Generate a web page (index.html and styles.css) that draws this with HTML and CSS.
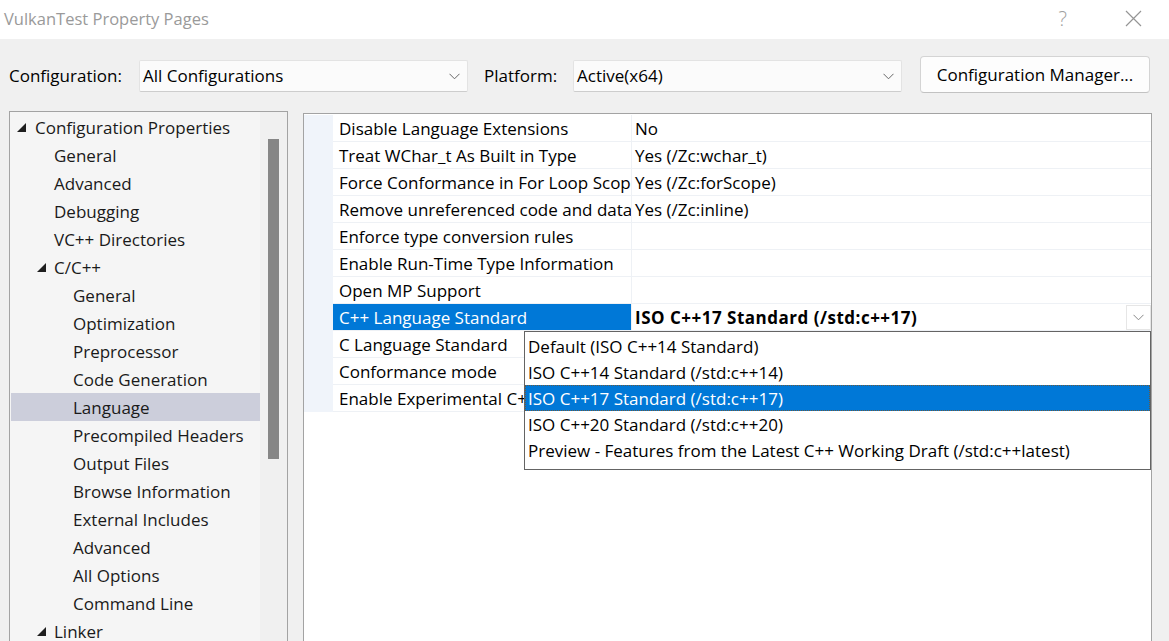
FILE: index.html
```html
<!DOCTYPE html>
<html>
<head>
<meta charset="utf-8">
<title>VulkanTest Property Pages</title>
<link rel="stylesheet" href="styles.css">
</head>
<body>
<div class="window">
  <div class="titlebar">
    <span class="title">VulkanTest Property Pages</span>
    <div class="caption">
      <span class="help">?</span>
      <svg class="close" width="17" height="17" viewBox="0 0 17 17"><path d="M1 1L16 16M16 1L1 16" stroke="#959595" stroke-width="1.2" fill="none"/></svg>
    </div>
  </div>
  <div class="content">
    <div class="toolbar">
      <span class="lbl lbl-config">Configuration:</span>
      <div class="combo"><span class="combo-text">All Configurations</span><svg class="chev" width="11" height="7" viewBox="0 0 11 7"><path d="M0.5 0.8L5.5 5.8L10.5 0.8" stroke="#666" stroke-width="1" fill="none"/></svg></div>
      <span class="lbl lbl-platform">Platform:</span>
      <div class="combo"><span class="combo-text">Active(x64)</span><svg class="chev" width="11" height="7" viewBox="0 0 11 7"><path d="M0.5 0.8L5.5 5.8L10.5 0.8" stroke="#666" stroke-width="1" fill="none"/></svg></div>
      <button class="btn">Configuration Manager...</button>
    </div>
    <div class="main">
      <div class="tree">
        <ul class="tree-items">
          <li class="node l0"><svg class="tri" width="9" height="9" viewBox="0 0 9 9"><path d="M9 0L9 9L0 9Z" fill="#1e1e1e"/></svg>Configuration Properties</li>
          <li class="node l1">General</li>
          <li class="node l1">Advanced</li>
          <li class="node l1">Debugging</li>
          <li class="node l1">VC++ Directories</li>
          <li class="node l1x"><svg class="tri" width="9" height="9" viewBox="0 0 9 9"><path d="M9 0L9 9L0 9Z" fill="#1e1e1e"/></svg>C/C++</li>
          <li class="node l2">General</li>
          <li class="node l2">Optimization</li>
          <li class="node l2">Preprocessor</li>
          <li class="node l2">Code Generation</li>
          <li class="node l2 selected">Language</li>
          <li class="node l2">Precompiled Headers</li>
          <li class="node l2">Output Files</li>
          <li class="node l2">Browse Information</li>
          <li class="node l2">External Includes</li>
          <li class="node l2">Advanced</li>
          <li class="node l2">All Options</li>
          <li class="node l2">Command Line</li>
          <li class="node l1x"><svg class="tri" width="9" height="9" viewBox="0 0 9 9"><path d="M9 0L9 9L0 9Z" fill="#1e1e1e"/></svg>Linker</li>
        </ul>
        <div class="scrollbar"><div class="thumb"></div></div>
      </div>
      <div class="props">
        <div class="grid">
          <div class="row"><div class="gutter"></div><div class="name">Disable Language Extensions</div><div class="value">No</div></div>
          <div class="row"><div class="gutter"></div><div class="name">Treat WChar_t As Built in Type</div><div class="value">Yes (/Zc:wchar_t)</div></div>
          <div class="row"><div class="gutter"></div><div class="name">Force Conformance in For Loop Scope</div><div class="value">Yes (/Zc:forScope)</div></div>
          <div class="row"><div class="gutter"></div><div class="name">Remove unreferenced code and data</div><div class="value">Yes (/Zc:inline)</div></div>
          <div class="row"><div class="gutter"></div><div class="name">Enforce type conversion rules</div><div class="value"></div></div>
          <div class="row"><div class="gutter"></div><div class="name">Enable Run-Time Type Information</div><div class="value"></div></div>
          <div class="row"><div class="gutter"></div><div class="name">Open MP Support</div><div class="value"></div></div>
          <div class="row active"><div class="gutter"></div><div class="name">C++ Language Standard</div><div class="value"><span class="bold">ISO C++17 Standard (/std:c++17)</span><span class="drop-btn"><svg width="11" height="7" viewBox="0 0 11 7"><path d="M0.5 0.8L5.5 5.8L10.5 0.8" stroke="#888" stroke-width="1" fill="none"/></svg></span></div></div>
          <div class="row"><div class="gutter"></div><div class="name">C Language Standard</div><div class="value"></div></div>
          <div class="row"><div class="gutter"></div><div class="name">Conformance mode</div><div class="value"></div></div>
          <div class="row"><div class="gutter"></div><div class="name">Enable Experimental C++ Standard Library Modules</div><div class="value"></div></div>
        </div>
        <ul class="dropdown-list">
          <li>Default (ISO C++14 Standard)</li>
          <li>ISO C++14 Standard (/std:c++14)</li>
          <li class="current">ISO C++17 Standard (/std:c++17)</li>
          <li>ISO C++20 Standard (/std:c++20)</li>
          <li>Preview - Features from the Latest C++ Working Draft (/std:c++latest)</li>
        </ul>
      </div>
    </div>
  </div>
</div>
</body>
</html>
```
FILE: styles.css
```css
* { box-sizing: border-box; }
html, body { margin: 0; padding: 0; }
body {
  font-family: "Open Sans", "Noto Sans", sans-serif;
  font-size: 17px;
  color: #1a1a1a;
  background: #f0f0f0;
}
.window {
  width: 1169px;
  height: 641px;
  overflow: hidden;
  background: #f0f0f0;
}
.titlebar {
  height: 39px;
  background: #ffffff;
  display: flex;
  align-items: center;
  justify-content: space-between;
  padding-left: 4px;
}
.title {
  color: #9a9a9a;
  font-size: 16.5px;
  margin-top: -3px;
}
.caption {
  display: flex;
  align-items: center;
  margin-top: -3px;
}
.help {
  color: #a0a0a0;
  font-size: 20px;
  font-weight: 300;
  margin-right: 58px;
}
.close { margin-right: 27px; }

.toolbar {
  height: 72px;
  display: flex;
  align-items: center;
  padding-left: 9px;
}
.lbl { color: #000; white-space: nowrap; }
.lbl-config { width: 130px; }
.lbl-platform { width: 89px; margin-left: 16px; }
.combo {
  width: 329px;
  height: 32px;
  margin-top: 1px;
  background: #fbfbfb;
  border: 1px solid #e3e3e3;
  border-bottom-color: #cdcdcd;
  border-radius: 2px;
  display: flex;
  align-items: center;
  justify-content: space-between;
  padding: 0 7px 0 3px;
  color: #000;
}
.chev { margin-top: 1px; }
.btn {
  width: 230px;
  height: 37px;
  margin-left: 18px;
  margin-top: -2px;
  font-family: inherit;
  font-size: 17px;
  color: #000;
  background: #fdfdfd;
  border: 1px solid #d4d4d4;
  border-bottom-color: #c2c2c2;
  border-radius: 4px;
  padding: 0;
}

.main {
  display: flex;
  align-items: flex-start;
  padding-left: 9px;
  height: 560px;
}
.tree {
  width: 279px;
  height: 560px;
  border: 1px solid #a3a3a3;
  background: #f5f5f5;
  display: flex;
  flex-shrink: 0;
}
.tree-items {
  list-style: none;
  margin: 0;
  padding: 1px 0 0 0;
  width: 250px;
}
.node {
  height: 28px;
  display: flex;
  align-items: center;
  margin-left: 1px;
  color: #1a1a1a;
  white-space: nowrap;
}
.tri { margin-right: 9px; flex-shrink: 0; }
.l0 { padding-left: 6px; }
.l1 { padding-left: 43px; }
.l1x { padding-left: 26px; }
.l1x .tri { margin-right: 8px; }
.l2 { padding-left: 62px; }
.node.selected { background: #cccedb; }
.scrollbar {
  width: 27px;
  background: #f0f0f0;
  padding: 27px 0 0 8px;
}
.thumb {
  width: 11px;
  height: 320px;
  background: #868686;
}

.props {
  position: relative;
  width: 849px;
  height: 560px;
  margin-left: 15px;
  margin-top: 2px;
  border: 1px solid #a3a3a3;
  background: #ffffff;
  padding-top: 1px;
}
.grid { display: flex; flex-direction: column; }
.row {
  display: flex;
  height: 27px;
}
.gutter {
  width: 29px;
  background: #f0f4fa;
  flex-shrink: 0;
}
.name {
  width: 299px;
  flex-shrink: 0;
  padding-left: 6px;
  border-right: 1px solid #eef1f5;
  border-bottom: 1px solid #eef1f5;
  white-space: nowrap;
  overflow: hidden;
  line-height: 27px;
  color: #000;
}
.value {
  flex: 1;
  padding-left: 3px;
  border-bottom: 1px solid #eef1f5;
  line-height: 27px;
  color: #000;
  display: flex;
  justify-content: space-between;
  align-items: flex-start;
}
.row.active .name {
  background: #0078d7;
  color: #ffffff;
}
.bold { font-weight: 700; letter-spacing: 0.5px; }
.drop-btn {
  width: 25px;
  height: 25px;
  margin-top: 1px;
  border: 1px solid #e6e6e6;
  background: #fff;
  display: flex;
  align-items: center;
  justify-content: center;
}

.dropdown-list {
  position: absolute;
  left: 220px;
  top: 217px;
  width: 627px;
  height: 139px;
  margin: 0;
  padding: 1px 0 0 0;
  list-style: none;
  background: #ffffff;
  border: 1px solid #646464;
}
.dropdown-list li {
  height: 26px;
  line-height: 27px;
  padding-left: 3px;
  color: #000;
  white-space: nowrap;
}
.dropdown-list li.current {
  background: #0078d7;
  color: #ffffff;
  outline: 1px dotted #6a5a40;
  outline-offset: -1px;
}
```
